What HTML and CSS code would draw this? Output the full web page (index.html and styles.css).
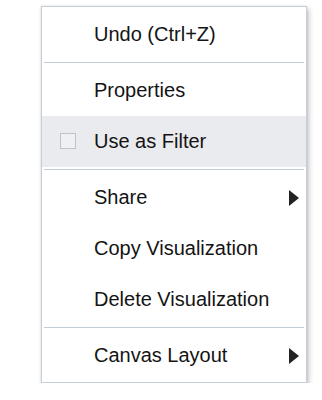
FILE: index.html
```html
<!DOCTYPE html>
<html>
<head>
<meta charset="utf-8">
<link rel="stylesheet" href="styles.css">
</head>
<body>
<div class="menu">
  <div class="group">
    <div class="item"><span class="label">Undo (Ctrl+Z)</span></div>
  </div>
  <div class="sep"></div>
  <div class="group">
    <div class="item"><span class="label">Properties</span></div>
    <div class="item active"><span class="check"></span><span class="label">Use as Filter</span></div>
  </div>
  <div class="sep"></div>
  <div class="group">
    <div class="item"><span class="label">Share</span><span class="arrow"></span></div>
    <div class="item"><span class="label">Copy Visualization</span></div>
    <div class="item"><span class="label">Delete Visualization</span></div>
  </div>
  <div class="sep"></div>
  <div class="group">
    <div class="item"><span class="label">Canvas Layout</span><span class="arrow"></span></div>
  </div>
</div>
</body>
</html>
```

FILE: styles.css
```css
html, body {
  margin: 0;
  padding: 0;
  background: #ffffff;
}
body {
  padding: 6px 0 0 41px;
  font-family: "Liberation Sans", Arial, Helvetica, sans-serif;
}
.menu {
  width: 264px;
  background: #ffffff;
  border: 1px solid #c6d0da;
  box-shadow: 0 0 2px rgba(0, 0, 0, 0.12), 2px 3px 5px rgba(0, 0, 0, 0.22);
}
.group {
  padding: 2px 0;
}
.group:last-child {
  padding-bottom: 1px;
}
.sep {
  height: 1px;
  margin: 0 2px;
  background: #c3ccd6;
}
.item {
  position: relative;
  height: 51px;
  display: flex;
  align-items: center;
  padding-left: 52px;
  font-size: 20px;
  color: #141414;
}
.item.active {
  background: #e9ebee;
}
.check {
  position: absolute;
  left: 18px;
  top: 17px;
  width: 14px;
  height: 14px;
  border: 1px solid #bcc4cc;
  background: #eef0f3;
}
.arrow {
  margin-left: auto;
  margin-right: 7px;
  width: 0;
  height: 0;
  border-top: 8px solid transparent;
  border-bottom: 8px solid transparent;
  border-left: 10px solid #222222;
}
```
